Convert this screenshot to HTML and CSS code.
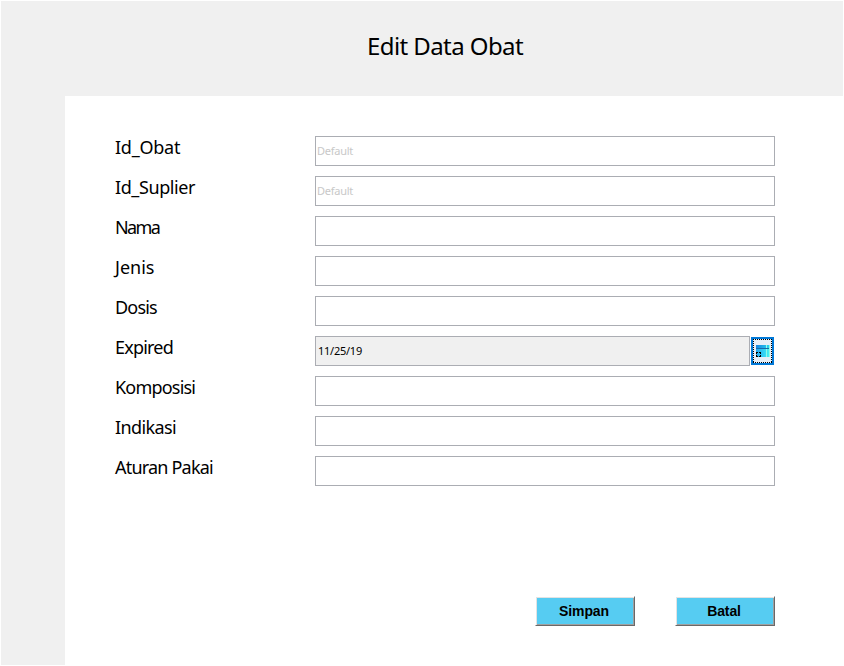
FILE: index.html
```html
<!DOCTYPE html>
<html lang="id">
<head>
<meta charset="utf-8">
<title>Edit Data Obat</title>
<link rel="stylesheet" href="styles.css">
</head>
<body>
<div class="window">
  <header class="header"><h1 class="title">Edit Data Obat</h1></header>
  <main class="panel">
    <form class="form">
      <div class="row"><label class="label snug" for="obat">Id_Obat</label><input class="field" id="obat" value="Default" disabled></div>
      <div class="row"><label class="label close" for="suplier">Id_Suplier</label><input class="field" id="suplier" value="Default" disabled></div>
      <div class="row"><label class="label tightest" for="nama">Nama</label><input class="field" id="nama"></div>
      <div class="row"><label class="label" for="jenis">Jenis</label><input class="field" id="jenis"></div>
      <div class="row"><label class="label tight" for="dosis">Dosis</label><input class="field" id="dosis"></div>
      <div class="row">
        <label class="label tight" for="expired">Expired</label>
        <div class="date">
          <input class="field date-field" id="expired" value="11/25/19" readonly>
          <button class="picker" type="button" aria-label="Kalender">
            <svg width="23" height="28" viewBox="0 0 23 28" shape-rendering="crispEdges">
              <defs>
                <linearGradient id="sky" x1="0" y1="0" x2="1" y2="0"><stop offset="0" stop-color="#1683e0"/><stop offset=".6" stop-color="#1fb4e9"/><stop offset="1" stop-color="#2bdcf0"/></linearGradient>
                <linearGradient id="sea" x1="0" y1="0" x2="1" y2="0"><stop offset="0" stop-color="#25a5ed"/><stop offset=".6" stop-color="#35d5f4"/><stop offset="1" stop-color="#4cf5f0"/></linearGradient>
              </defs>
              <rect width="23" height="28" fill="#0078d7"/>
              <rect x="2" y="2" width="19" height="24" fill="#e6eff7"/>
              <path d="M2 2.500H21M2 25.500H21M2.500 2V26M20.500 2V26" fill="none" stroke="#000" stroke-dasharray="1 1"/>
              <rect x="5" y="8" width="14" height="3" fill="url(#sky)"/>
              <rect x="5" y="11" width="14" height="1" fill="#1769a8"/>
              <rect x="5" y="12" width="14" height="8" fill="url(#sea)"/>
              <path d="M15.500 8V11M15.500 12V20M18.500 8V20" stroke="#8ffbe8"/>
              <path d="M5 15H7V16H6V17H5ZM8 15H10V17H9V16H8ZM5 18H6V19H7V20H5ZM9 18H10V20H8V19H9Z"/>
            </svg>
          </button>
        </div>
      </div>
      <div class="row"><label class="label tight" for="komposisi">Komposisi</label><input class="field" id="komposisi"></div>
      <div class="row"><label class="label medium" for="indikasi">Indikasi</label><input class="field" id="indikasi"></div>
      <div class="row"><label class="label tight" for="aturan">Aturan Pakai</label><input class="field" id="aturan"></div>
      <div class="actions"><button class="action" type="button">Simpan</button><button class="action" type="button">Batal</button></div>
    </form>
  </main>
</div>
</body>
</html>
```
FILE: styles.css
```css
* { box-sizing: border-box; }
body { margin: 0; padding: 1px; background: #fff; color: #000; overflow: hidden; font-family: "Noto Sans", sans-serif; }
.window { width: 842px; height: 664px; background: #f0f0f0; }
.header { height: 95px; padding: 28px 0 0 366px; }
.title { margin: 0; font-size: 24px; line-height: 34px; font-weight: 400; letter-spacing: -.58px; white-space: nowrap; }
.panel { margin-left: 64px; height: 569px; padding: 40px 0 0 50px; background: #fff; }
.form { width: 660px; display: flex; flex-direction: column; gap: 10px; }
.row { display: grid; grid-template-columns: 200px 460px; height: 30px; }
.label { font-size: 18px; line-height: 22px; white-space: nowrap; }
.snug { letter-spacing: -.25px; }
.close { letter-spacing: -.4px; }
.medium { letter-spacing: -.6px; }
.tight { letter-spacing: -.8px; }
.tightest { letter-spacing: -1.6px; }
.field { width: 100%; height: 30px; margin: 0; padding: 0 1px 1px; border: 1px solid #abadb3; border-radius: 0; background: #fff; color: #000; font: 11px "Noto Sans", sans-serif; letter-spacing: -.25px; outline: 0; }
.field:disabled { color: #c8c8c8; -webkit-text-fill-color: #c8c8c8; }
.date { display: flex; gap: 1px; align-items: center; }
.date-field { width: 435px; padding-left: 2px; background: #f0f0f0; }
.picker { width: 23px; height: 28px; padding: 0; border: 0; background: none; }
.picker svg { display: block; }
.actions { display: flex; justify-content: flex-end; gap: 40px; margin-top: 100px; }
.action { width: 100px; height: 30px; padding: 0 2px 1px 0; border: 1px solid; border-color: #fff #696969 #696969 #fff; border-radius: 0; background: #56ccf2; box-shadow: inset 1px 1px #e3e3e3, inset -1px -1px #a0a0a0; color: #000; font: bold 14px "Liberation Sans", Arial, sans-serif; letter-spacing: -.1px; }
```
